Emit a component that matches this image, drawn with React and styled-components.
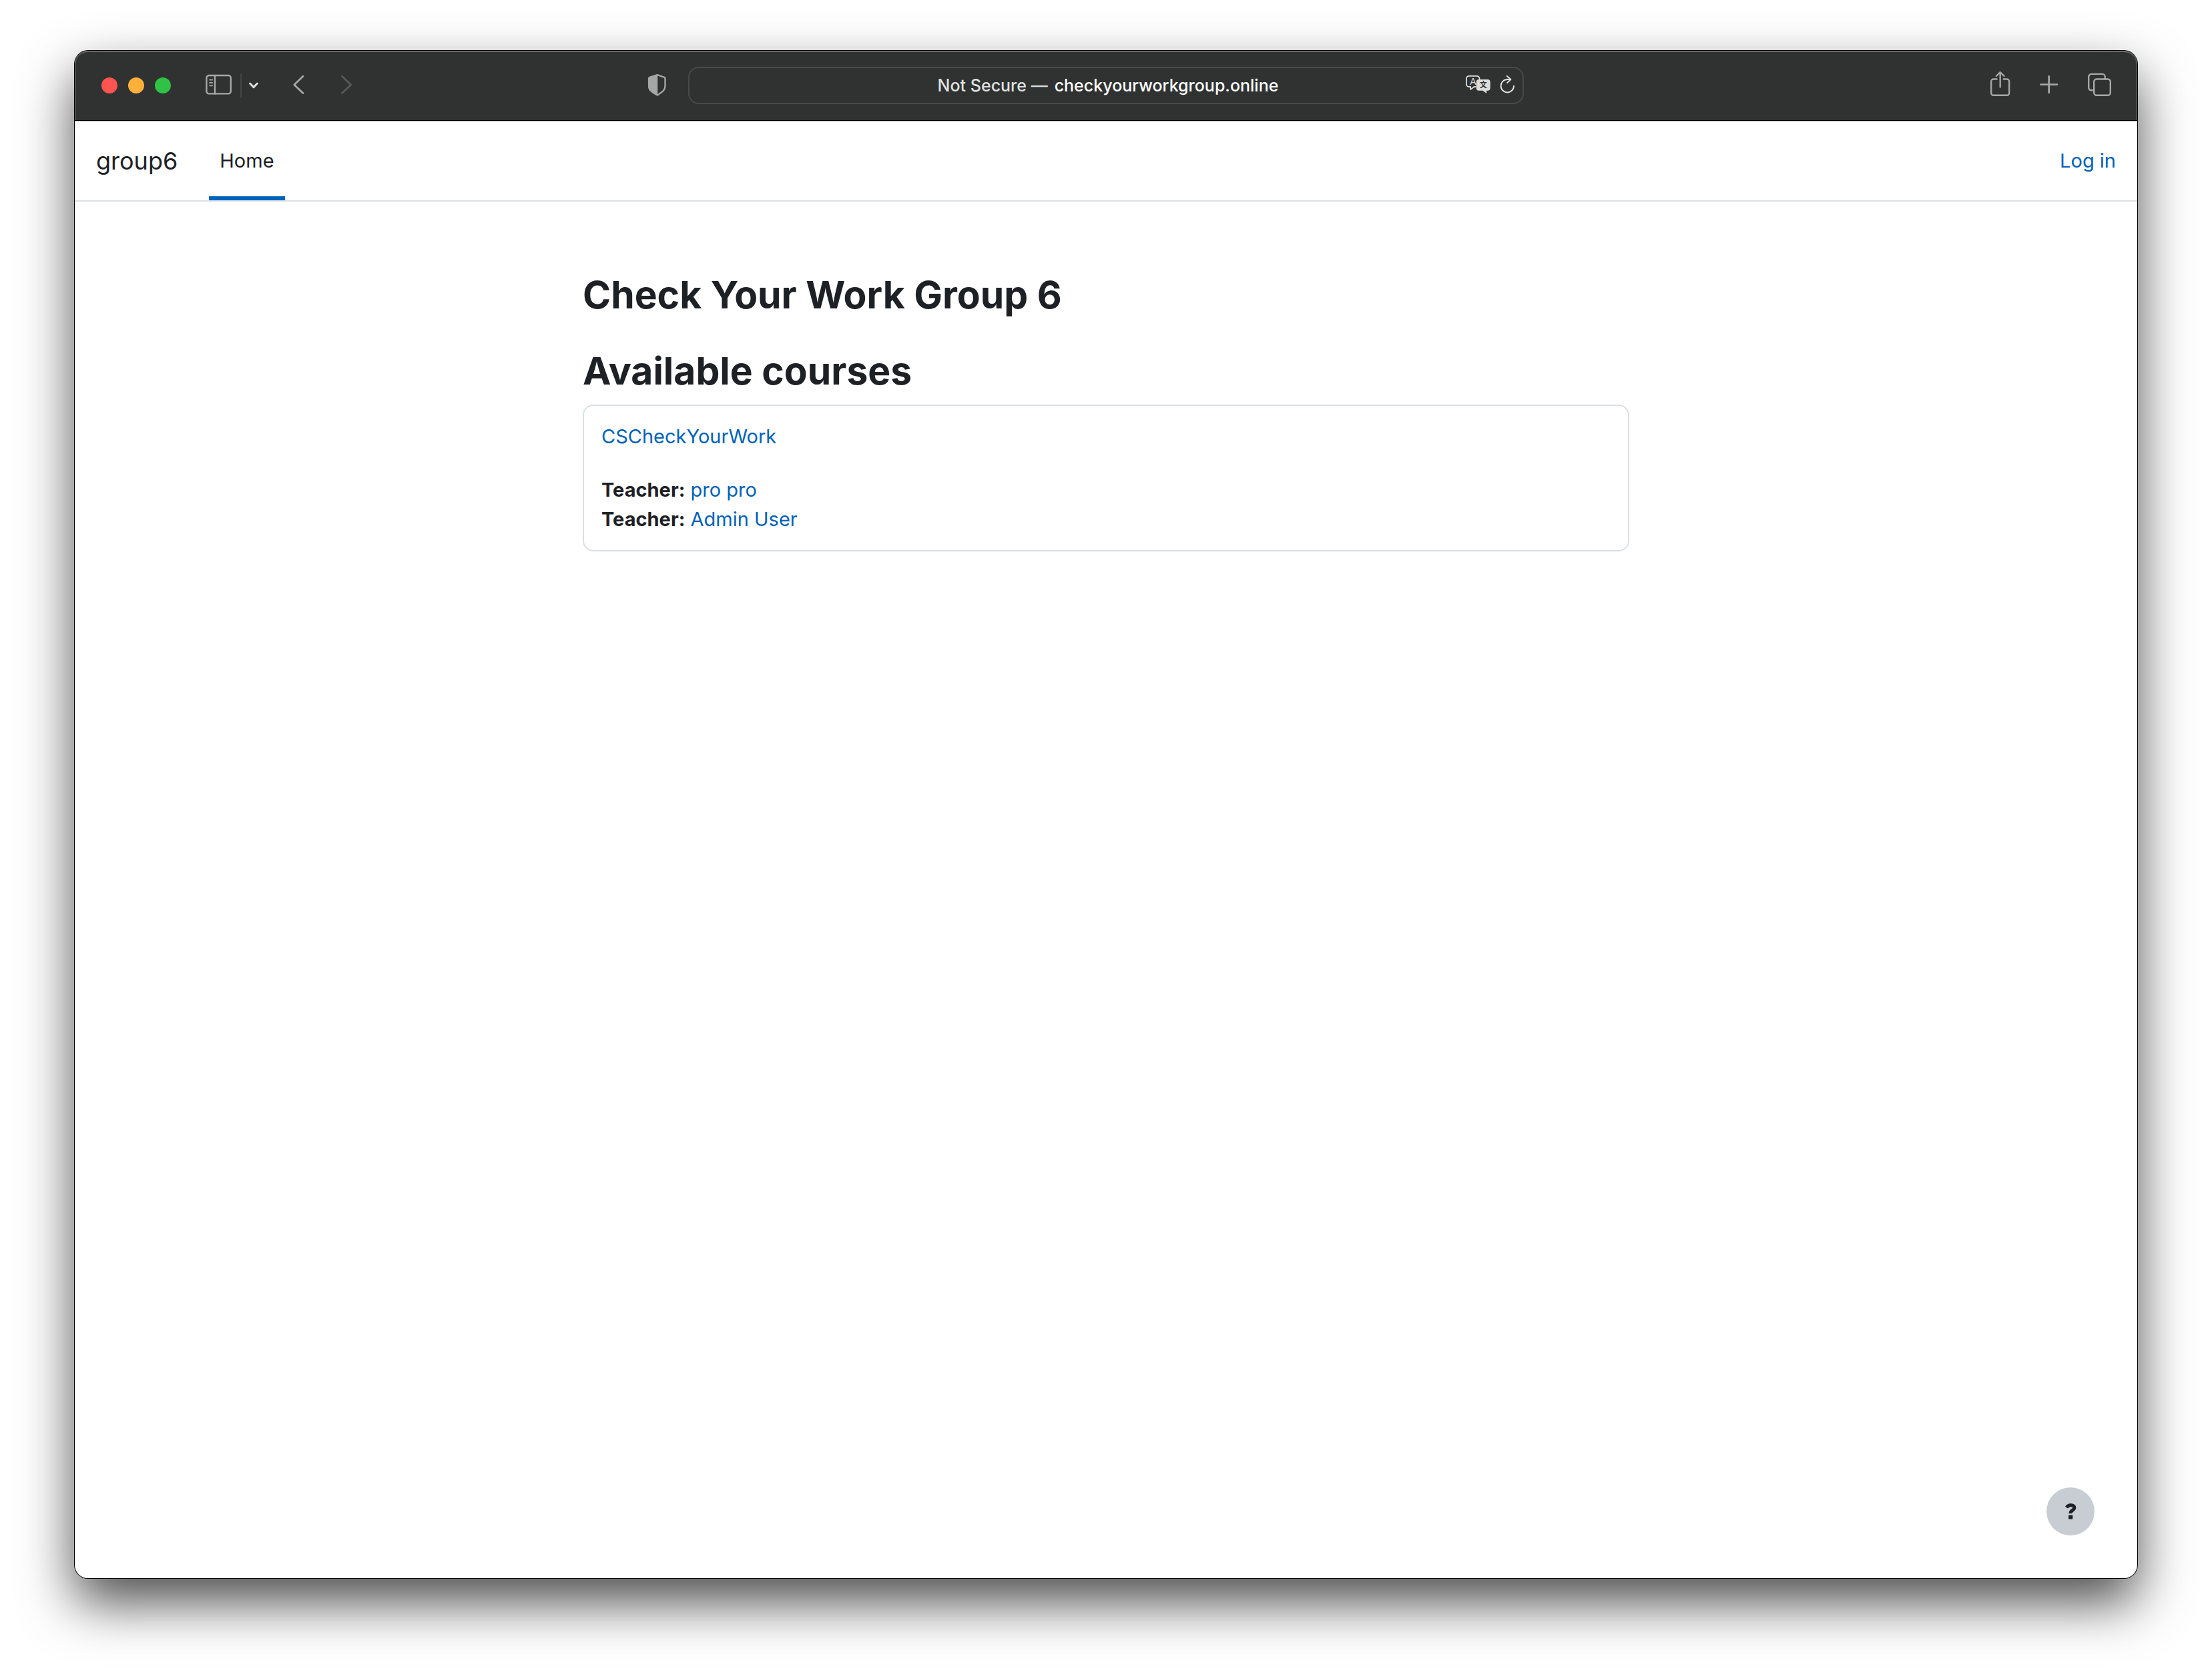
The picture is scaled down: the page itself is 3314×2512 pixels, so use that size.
import React from "react";
import styled, { createGlobalStyle } from "styled-components";

const colors = {
  chrome: "#303231",
  chromeLine: "#484a49",
  icon: "#a5a7a6",
  iconDim: "#575958",
  iconBright: "#dcdddd",
  ink: "#1d2125",
  link: "#0062b8",
  rule: "#dae0e5",
};

const GlobalStyle = createGlobalStyle`
  *, *::before, *::after { box-sizing: border-box; }
  body {
    margin: 0;
    background: #fff;
    color: ${colors.ink};
    font-family: Inter, "Liberation Sans", sans-serif;
    font-size: 29px;
    line-height: 44px;
  }
`;

const Desktop = styled.div`
  display: flex;
  flex-direction: column;
  min-height: 100vh;
  padding: 76px 112px 148px;
`;

const BrowserWindow = styled.div`
  flex: 1;
  display: flex;
  flex-direction: column;
  overflow: hidden;
  border-radius: 20px;
  background: #fff;
  box-shadow: 0 0 0 1px #000, 0 36px 80px rgba(0, 0, 0, 0.7);
`;

const Toolbar = styled.div`
  display: grid;
  grid-template-columns: 1fr minmax(0, 1252px) 1fr;
  align-items: center;
  height: 105px;
  border-radius: 20px 20px 0 0;
  border-bottom: 1px solid #000;
  background: ${colors.chrome};
  box-shadow: inset 2px 0 #4c4e4d, inset -2px 0 #4c4e4d, inset 0 2px #6c6e6d;
`;

const ToolbarStart = styled.div`
  display: flex;
  align-items: center;
  padding: 0 32px 0 40px;
`;

const ToolbarEnd = styled.div`
  display: flex;
  align-items: center;
  justify-content: flex-end;
  gap: 42px;
  padding: 0 37px;
`;

const TrafficLights = styled.div`
  display: flex;
  gap: 16px;
  margin-right: 52px;
`;

const Light = styled.button`
  width: 24px;
  height: 24px;
  padding: 0;
  border: 0;
  border-radius: 50%;
  background: ${(p) => p.$color};
`;

const IconButton = styled.button`
  display: flex;
  margin: 0 0 0 ${(p) => p.$before || 0}px;
  padding: 0;
  border: 0;
  background: none;
  color: ${(p) => p.$color || colors.icon};
`;

const ShieldButton = styled(IconButton)`
  margin-left: auto;
`;

const Divider = styled.span`
  width: 2px;
  height: 36px;
  margin-left: 12px;
  background: #434544;
`;

const Icon = styled.svg.attrs({ "aria-hidden": true })`
  display: block;
  fill: none;
  stroke: currentColor;
  stroke-width: 2.4;
  stroke-linecap: round;
  stroke-linejoin: round;
`;

const AddressBar = styled.div`
  display: grid;
  grid-template-columns: 1fr auto 1fr;
  align-items: center;
  height: 56px;
  border: 2px solid ${colors.chromeLine};
  border-radius: 16px;
  padding: 0 10px 0 16px;
  font-size: 25px;
  font-weight: 500;
`;

const Address = styled.div`
  grid-column: 2;
  display: flex;
  align-items: center;
  gap: 10px;
`;

const AddressLabel = styled.label`
  color: #dfe0e0;
  white-space: nowrap;
`;

const AddressInput = styled.input`
  field-sizing: content;
  padding: 0;
  border: 0;
  outline: 0;
  background: none;
  color: #fff;
  font: inherit;
`;

const AddressActions = styled.div`
  display: flex;
  justify-content: flex-end;
  gap: 12px;
`;

const SiteNav = styled.nav`
  display: flex;
  align-items: center;
  height: 121px;
  padding: 0 32px;
  border-top: 1px solid #bdbebe;
  border-bottom: 2px solid ${colors.rule};
`;

const Brand = styled.a`
  margin-right: 47px;
  color: ${colors.ink};
  font-size: 36px;
  text-decoration: none;
`;

const NavTab = styled.a`
  display: flex;
  align-items: center;
  align-self: stretch;
  padding: 6px 16px 0;
  border-bottom: 6px solid ${colors.link};
  color: ${colors.ink};
  text-decoration: none;
`;

const Link = styled.a`
  color: ${colors.link};
  text-decoration: none;
`;

const LoginLink = styled(Link)`
  margin-left: auto;
`;

const Page = styled.div`
  flex: 1;
  display: flex;
  flex-direction: column;
  justify-content: space-between;
  padding: 104px 64px 64px;
`;

const Content = styled.main`
  width: 100%;
  max-width: 1568px;
  margin: 0 auto;
`;

const Heading = styled.h1`
  margin: 0 0 ${(p) => p.$after}px;
  font-size: 57px;
  font-weight: 700;
  line-height: 72px;
`;

const CourseCard = styled.section`
  display: flex;
  flex-direction: column;
  gap: 36px;
  padding: 24px 26px;
  border: 2px solid ${colors.rule};
  border-radius: 16px;
`;

const CourseName = styled.h3`
  margin: 0;
  font: inherit;
`;

const Teachers = styled.ul`
  margin: 0;
  padding: 0;
  list-style: none;
`;

const Role = styled.span`
  font-weight: 700;
`;

const HelpButton = styled.button`
  display: flex;
  align-items: center;
  justify-content: center;
  align-self: flex-end;
  width: 72px;
  height: 72px;
  padding: 0;
  border: 0;
  border-radius: 50%;
  background: #c8cdd3;
  color: ${colors.ink};
`;

const SidebarIcon = () => (
  <Icon width="40" height="44" viewBox="0 0 40 44">
    <rect x="1.4" y="7" width="36.4" height="27.4" rx="3.6" />
    <path d="M14 7v27.4" />
    <path d="M6 13.7h4.2M6 18h4.2M6 22.3h4.2" strokeWidth="1.8" />
  </Icon>
);

const ChevronDownIcon = () => (
  <Icon width="16" height="44" viewBox="0 0 16 44">
    <path d="M2.6 19l5.4 5.6 5.4-5.6" strokeWidth="3" />
  </Icon>
);

const BackIcon = () => (
  <Icon width="18" height="44" viewBox="0 0 18 44">
    <path d="M16 8.2L2.8 21 16 33.6" strokeWidth="2.8" />
  </Icon>
);

const ForwardIcon = () => (
  <Icon width="18" height="44" viewBox="0 0 18 44">
    <path d="M2.4 8.2L15.8 21 2.4 33.6" strokeWidth="2.8" />
  </Icon>
);

const ShieldIcon = () => (
  <Icon width="30" height="44" viewBox="0 0 30 44">
    <path d="M15.8 6.1l10.6 3.8q1.1.4 1.1 1.6V23c0 6.600-4.700 8.800-11.700 13.500C7.800 31.800 3.100 29.600 3.100 23V11.500q0-1.200 1.100-1.600z" />
    <path
      d="M15.800 6.100v30.400C7.800 31.800 3.100 29.600 3.100 23V11.500q0-1.200 1.100-1.600z"
      fill="currentColor"
      strokeWidth="1"
    />
  </Icon>
);

const TranslateIcon = () => (
  <Icon width="40" height="44" viewBox="0 0 40 44">
    <path
      d="M15.500 24h-2l-5.300 4v-4H6a4 4 0 0 1-4-4v-8.200a4 4 0 0 1 4-4h11.500a4 4 0 0 1 4 4V13"
      strokeWidth="1.800"
    />
    <path
      d="M20.700 13h13a4 4 0 0 1 4 4v8.700a4 4 0 0 1-4 4h-1.500V34l-5.600-4.300h-5.900a4 4 0 0 1-4-4V17a4 4 0 0 1 4-4z"
      fill="currentColor"
      stroke="none"
    />
    <text x="12" y="20.600" textAnchor="middle" fontSize="14" fontWeight="500" fill="currentColor" stroke="none">
      A
    </text>
    <text
      x="27.200"
      y="25.400"
      textAnchor="middle"
      fontSize="11"
      fontWeight="700"
      fontFamily="Noto Sans CJK SC, sans-serif"
      fill={colors.chrome}
      stroke="none"
    >
      文
    </text>
  </Icon>
);

const ReloadIcon = () => (
  <Icon width="24" height="44" viewBox="0 0 24 44">
    <path d="M21 22.700A9.700 9.700 0 1 1 11.300 13h4.700M10.800 8l5.600 5-5.300 5" strokeWidth="2" />
  </Icon>
);

const ShareIcon = () => (
  <Icon width="32" height="44" viewBox="0 0 32 44">
    <path d="M10.600 12.500H5.600a3.400 3.400 0 0 0-3.400 3.400v17.500a3.400 3.400 0 0 0 3.400 3.400h20.200a3.400 3.400 0 0 0 3.400-3.400V15.900a3.400 3.400 0 0 0-3.400-3.400h-5" />
    <path d="M15.700 24.500V2.500M9.800 8l5.900-5.800L21.600 8" />
  </Icon>
);

const PlusIcon = () => (
  <Icon width="30" height="44" viewBox="0 0 30 44">
    <path d="M14.700 8.400v24.400M2.500 20.600h24.400" strokeWidth="2.800" />
  </Icon>
);

const TabsIcon = () => (
  <Icon width="38" height="44" viewBox="0 0 38 44">
    <path d="M10.400 29.200H6.200a4 4 0 0 1-4-4V8.900a4 4 0 0 1 4-4h16.500a4 4 0 0 1 4 4v3.600" />
    <rect x="10.200" y="12.500" width="24.600" height="24.200" rx="4" />
  </Icon>
);

const QuestionIcon = () => (
  <svg width="20" height="26" viewBox="-0.8 0 20 26" aria-hidden="true">
    <path
      d="M3.200 7.100C5 4.600 7.200 3.500 9.700 3.500c3 0 5.300 1.500 5.300 4 0 3.800-5.900 3.600-5.900 8.600"
      fill="none"
      stroke="currentColor"
      strokeWidth="5"
    />
    <rect x="6.300" y="18.400" width="6.200" height="6" rx="1" fill="currentColor" />
  </svg>
);

const lights = [
  { name: "Close", color: "#ff544f" },
  { name: "Minimize", color: "#ffb03a" },
  { name: "Zoom", color: "#2fc244" },
];

const teachers = ["pro pro", "Admin User"];

export default function App() {
  return (
    <>
      <GlobalStyle />
      <Desktop>
        <BrowserWindow>
          <Toolbar>
            <ToolbarStart>
              <TrafficLights>
                {lights.map((light) => (
                  <Light key={light.name} $color={light.color} aria-label={light.name} />
                ))}
              </TrafficLights>
              <IconButton aria-label="Sidebar"><SidebarIcon /></IconButton>
              <Divider />
              <IconButton $before={10} $color={colors.iconBright} aria-label="Tab groups"><ChevronDownIcon /></IconButton>
              <IconButton $before={50} aria-label="Back"><BackIcon /></IconButton>
              <IconButton $before={54} $color={colors.iconDim} aria-label="Forward"><ForwardIcon /></IconButton>
              <ShieldButton aria-label="Privacy report"><ShieldIcon /></ShieldButton>
            </ToolbarStart>
            <AddressBar>
              <Address>
                <AddressLabel htmlFor="address">Not Secure —</AddressLabel>
                <AddressInput id="address" type="text" defaultValue="checkyourworkgroup.online" />
              </Address>
              <AddressActions>
                <IconButton $color={colors.iconBright} aria-label="Translate"><TranslateIcon /></IconButton>
                <IconButton $color={colors.iconBright} aria-label="Reload"><ReloadIcon /></IconButton>
              </AddressActions>
            </AddressBar>
            <ToolbarEnd>
              <IconButton aria-label="Share"><ShareIcon /></IconButton>
              <IconButton aria-label="New tab"><PlusIcon /></IconButton>
              <IconButton aria-label="Show tabs"><TabsIcon /></IconButton>
            </ToolbarEnd>
          </Toolbar>

          <SiteNav>
            <Brand href="#">group6</Brand>
            <NavTab href="#" aria-current="page">Home</NavTab>
            <LoginLink href="#login">Log in</LoginLink>
          </SiteNav>

          <Page>
            <Content>
              <Heading $after={42}>Check Your Work Group 6</Heading>
              <Heading as="h2" $after={14}>Available courses</Heading>
              <CourseCard>
                <CourseName><Link href="#course">CSCheckYourWork</Link></CourseName>
                <Teachers>
                  {teachers.map((name) => (
                    <li key={name}>
                      <Role>Teacher:</Role> <Link href="#user">{name}</Link>
                    </li>
                  ))}
                </Teachers>
              </CourseCard>
            </Content>
            <HelpButton aria-label="Help"><QuestionIcon /></HelpButton>
          </Page>
        </BrowserWindow>
      </Desktop>
    </>
  );
}
